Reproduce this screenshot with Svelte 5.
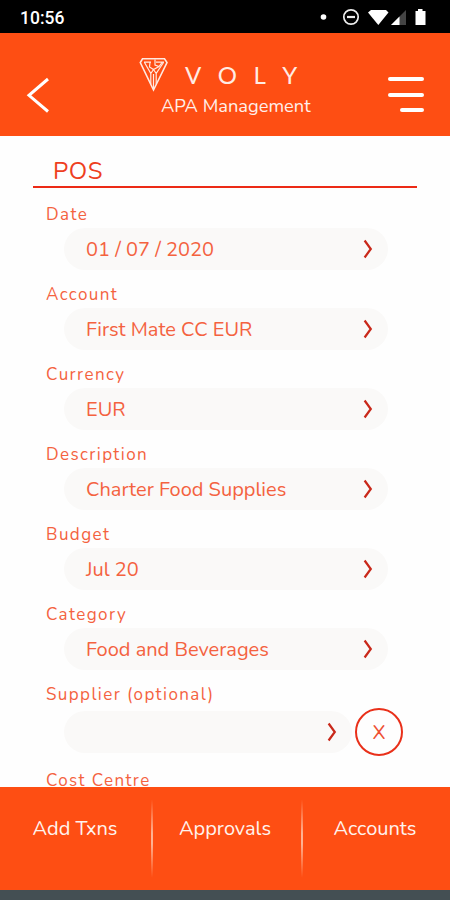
<script>
    let supplier = '';

    // form rows above the supplier row
    const fields = [
        { label: 'Date', value: '01 / 07 / 2020' },
        { label: 'Account', value: 'First Mate CC EUR' },
        { label: 'Currency', value: 'EUR' },
        { label: 'Description', value: 'Charter Food Supplies' },
        { label: 'Budget', value: 'Jul 20' },
        { label: 'Category', value: 'Food and Beverages' }
    ];

    const tabs = ['Add Txns', 'Approvals', 'Accounts'];

    function clearSupplier() {
        supplier = '';
    }
</script>

{#snippet chevron()}
    <svg class="chevron" width="10" height="20" viewBox="0 0 10 20">
        <path d="M1.6 1.500 L7.8 10 L1.6 18.500" />
    </svg>
{/snippet}

<div class="screen">
    <div class="status">
        <span class="time">10:56</span>
        <svg width="110" height="34" viewBox="316 0 110 34">
            <circle cx="323.5" cy="17" r="2.8" fill="#fff" />
            <circle cx="351" cy="17" r="7.2" fill="none" stroke="#eee" stroke-width="1.7" />
            <path d="M347 17h8" stroke="#eee" stroke-width="2.2" />
            <path d="M368 12.500L371 10H386L388.500 12.500L378.300 25Z" fill="#fff" />
            <path d="M406 10V25H391Z" fill="#444" />
            <path d="M399.500 16.500V25H391Z" fill="#fff" />
            <path d="M415.500 11h2.500V9h4.500v2h3V25h-10Z" fill="#fff" />
        </svg>
    </div>

    <header>
        <button class="back" aria-label="Back">
            <svg width="24" height="36" viewBox="0 0 24 36">
                <path d="M22 2 L3 18.300 L22 34.500" />
            </svg>
        </button>
        <div class="brand">
            <div class="logo">
                <svg width="30" height="36" viewBox="0 0 30 36">
                    <path d="M3.500 1.800H25.500L28 5.500L14.500 33L1.300 5.500Z" stroke-width="1.6" />
                    <path d="M5.500 5.500L11.800 16.500V27M24.500 5.500L17.200 16.500V27M5 5.200H12M17 5.200H25M11 5.500L10.500 10L14.500 12.500L20 9.500L23 5.500M16 2.500V8L20 9.500M14.500 17V32M11.800 16.500L14.500 12.500L17.200 16.500" stroke-width="1.2" />
                </svg>
                <div class="word">
                    <span>V</span><span>O</span><span>L</span><span>Y</span>
                </div>
            </div>
            <div class="subtitle">APA Management</div>
        </div>
        <button class="menu" aria-label="Menu">
            <i></i>
            <i></i>
            <i class="short"></i>
        </button>
    </header>

    <main>
        <h1>POS</h1>
        {#each fields as field}
            <div class="field">
                <div class="label">{field.label}</div>
                <div class="pill">
                    <span>{field.value}</span>
                    {@render chevron()}
                </div>
            </div>
        {/each}
        <div class="field">
            <div class="label">Supplier (optional)</div>
            <div class="row">
                <div class="pill small">
                    <span>{supplier}</span>
                    {@render chevron()}
                </div>
                <button class="clear" on:click={clearSupplier}>X</button>
            </div>
        </div>
        <div class="field">
            <div class="label">Cost Centre</div>
        </div>
    </main>

    <footer>
        {#each tabs as tab}
            <button class="tab">{tab}</button>
        {/each}
    </footer>
    <div class="navbar"></div>
</div>

<style>
    :global(body) {
        background: #fff;
    }

    .screen {
        display: flex;
        flex-direction: column;
        width: 450px;
        height: 900px;
        overflow: hidden;
        background: #fefefe;
        font-family: Nunito, Lato, sans-serif;
    }

    button {
        padding: 0;
        border: none;
        background: none;
        font-family: inherit;
    }

    .status {
        display: flex;
        flex: none;
        align-items: center;
        justify-content: space-between;
        height: 33px;
        padding: 0 24px 0 20px;
        background: #000;
    }

    .time {
        padding-top: 2px;
        color: #fff;
        font-family: Roboto, sans-serif;
        font-size: 17.500px;
        font-weight: 500;
    }

    header {
        display: flex;
        flex: none;
        align-items: flex-start;
        justify-content: space-between;
        height: 103px;
        padding: 0 26px;
        box-sizing: border-box;
        background: #fe4e13;
    }

    .back {
        width: 24px;
        height: 36px;
        margin-top: 44px;
    }

    .back path {
        fill: none;
        stroke: #fff;
        stroke-width: 3;
    }

    .brand {
        width: 174px;
        margin-left: 14px;
        padding-top: 24px;
    }

    .logo {
        display: flex;
    }

    .logo path {
        fill: none;
        stroke: #ffe9e0;
    }

    .word {
        display: flex;
        gap: 16.500px;
        margin-left: 16px;
        padding-top: 3px;
        color: #ffece4;
        font-family: Lato, sans-serif;
        font-size: 24px;
        font-weight: 400;
        line-height: 30px;
    }

    .subtitle {
        margin: 1px 0 0 22px;
        color: #fff0ea;
        font-size: 18.300px;
        line-height: 24px;
        white-space: nowrap;
    }

    .menu {
        display: flex;
        flex-direction: column;
        align-items: flex-end;
        gap: 11.500px;
        margin-top: 44px;
    }

    .menu i {
        width: 36px;
        height: 4px;
        border-radius: 2px;
        background: #fff;
    }

    .menu .short {
        width: 24px;
    }

    main {
        flex: 1;
        min-height: 0;
        padding: 19px 33px 0;
        overflow: hidden;
        color: #f4623f;
    }

    h1 {
        height: 31px;
        margin: 0 0 17px;
        padding-left: 20px;
        border-bottom: 2px solid #ec2a16;
        color: #ee3f1e;
        font-size: 24px;
        font-weight: 400;
        letter-spacing: 0.700px;
        line-height: 33px;
    }

    .field {
        margin-bottom: 15px;
        padding-left: 13px;
    }

    .label {
        height: 23px;
        font-size: 17px;
        line-height: 20px;
        letter-spacing: 1.400px;
    }

    .pill {
        display: flex;
        align-items: center;
        justify-content: space-between;
        width: 324px;
        height: 42px;
        margin-left: 18px;
        padding: 0 15px 0 22px;
        box-sizing: border-box;
        border-radius: 21px;
        background: #faf9f8;
        font-size: 20px;
        white-space: nowrap;
    }

    .pill span {
        padding-top: 1px;
    }

    .pill.small {
        width: 288px;
    }

    .chevron path {
        fill: none;
        stroke: #c9281a;
        stroke-width: 2.200;
    }

    .row {
        display: flex;
        align-items: center;
        gap: 3px;
    }

    .clear {
        width: 48px;
        height: 48px;
        box-sizing: border-box;
        border: 2px solid #e9301a;
        border-radius: 50%;
        color: #ee5133;
        font-size: 20px;
    }

    footer {
        display: grid;
        flex: none;
        grid-template-columns: repeat(3, 150px);
        height: 103px;
        background: #fe4e13;
    }

    .tab {
        display: flex;
        align-items: flex-start;
        justify-content: center;
        padding-top: 28px;
        color: #fff3ee;
        font-size: 20px;
    }

    .tab + .tab {
        background: linear-gradient(transparent 12%, #ffb292 45%, #ffb292 55%, transparent 88%) 1px 0 / 2px 100% no-repeat;
    }

    .navbar {
        flex: none;
        height: 10px;
        background: #444f53;
    }
</style>
